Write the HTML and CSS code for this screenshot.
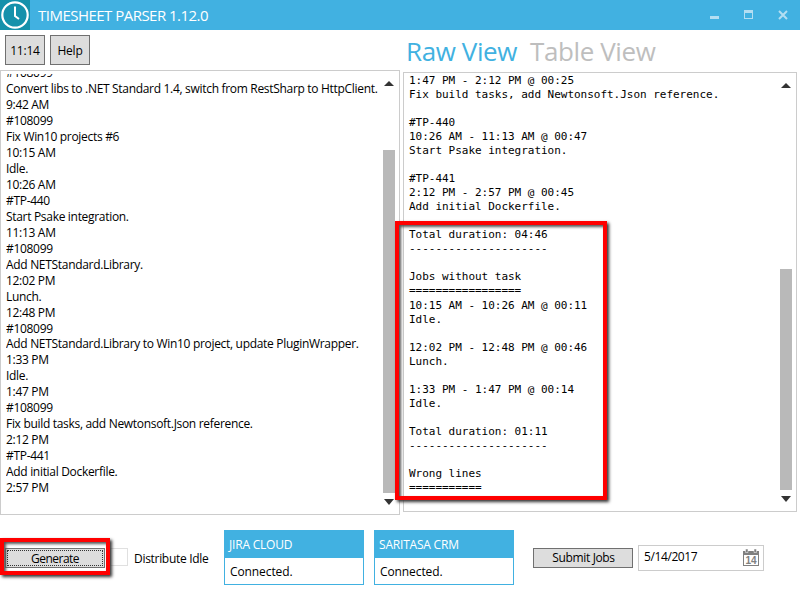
FILE: index.html
```html
<!DOCTYPE html>
<html lang="en">
<head>
<meta charset="utf-8">
<title>Timesheet Parser</title>
<link rel="stylesheet" href="styles.css">
</head>
<body>
<div class="app">
  <header class="titlebar">
    <svg class="logo" width="30" height="30" viewBox="0 0 30 30"><rect width="30" height="30" fill="#1591ab"/><circle cx="15" cy="15" r="12.7" fill="none" stroke="#fff" stroke-width="2.2"/><path d="M15 6.500v9.500l4 3" fill="none" stroke="#fff" stroke-width="2"/></svg>
    <h1 class="title">TIMESHEET PARSER 1.12.0</h1>
    <svg class="controls" width="80" height="30" viewBox="0 0 80 30" fill="#b3def2"><rect x="-10" y="16" width="9" height="3"/><path d="M24 10h9v9h-9zM25 13v5h7v-5z" fill-rule="evenodd"/><path d="M59 11l8 8M67 11l-8 8" stroke="#b3def2" stroke-width="2"/></svg>
  </header>
  <main class="panes">
    <section class="left">
      <div class="toolbar"><button class="btn tool">11:14</button><button class="btn tool">Help</button></div>
      <div class="box">
        <pre class="notes">#108099
Convert libs to .NET Standard 1.4, switch from RestSharp to HttpClient.
9:42 AM
#108099
Fix Win10 projects #6
10:15 AM
Idle.
10:26 AM
#TP-440
Start Psake integration.
11:13 AM
#108099
Add NETStandard.Library.
12:02 PM
Lunch.
12:48 PM
#108099
Add NETStandard.Library to Win10 project, update PluginWrapper.
1:33 PM
Idle.
1:47 PM
#108099
Fix build tasks, add Newtonsoft.Json reference.
2:12 PM
#TP-441
Add initial Dockerfile.
2:57 PM</pre>
        <div class="scroll scroll-left"><i class="up"></i><i class="thumb"></i><i class="down"></i></div>
      </div>
    </section>
    <section class="right">
      <nav class="tabs"><span class="tab active">Raw View</span><span class="tab">Table View</span></nav>
      <div class="box">
        <pre class="report">1:47 PM - 2:12 PM @ 00:25
Fix build tasks, add Newtonsoft.Json reference.

#TP-440
10:26 AM - 11:13 AM @ 00:47
Start Psake integration.

#TP-441
2:12 PM - 2:57 PM @ 00:45
Add initial Dockerfile.

Total duration: 04:46
---------------------

Jobs without task
=================
10:15 AM - 10:26 AM @ 00:11
Idle.

12:02 PM - 12:48 PM @ 00:46
Lunch.

1:33 PM - 1:47 PM @ 00:14
Idle.

Total duration: 01:11
---------------------

Wrong lines
===========</pre>
        <div class="scroll scroll-right"><i class="up"></i><i class="thumb"></i><i class="down"></i></div>
      </div>
    </section>
  </main>
  <footer class="footer">
    <button class="btn generate"><span>Generate</span></button>
    <span class="check"></span>
    <span class="check-label">Distribute Idle</span>
    <div class="card"><div class="card-head">JIRA CLOUD</div><div class="card-body">Connected.</div></div>
    <div class="card second"><div class="card-head">SARITASA CRM</div><div class="card-body">Connected.</div></div>
    <button class="btn submit">Submit Jobs</button>
    <div class="date"><span>5/14/2017</span>
      <svg width="16" height="17" viewBox="0 0 16 17"><path d="M0 2h16v15H0zM1 6v10h14V6z" fill="#808080" fill-rule="evenodd"/><path d="M2.500 0h2.500v3.500h-2.500zM11 0h2.500v3.500h-2.500z" fill="#808080" stroke="#fff" stroke-width=".5"/><text x="8" y="14.800" text-anchor="middle" class="day">14</text></svg>
    </div>
  </footer>
  <div class="mark mark-report"></div>
  <div class="mark mark-generate"></div>
</div>
</body>
</html>
```
FILE: styles.css
```css
* { box-sizing: border-box; }
body { margin: 0; background: #fff; }
.app { position: relative; width: 800px; height: 600px; overflow: hidden; display: flex; flex-direction: column; background: #fff; color: #000; font: 12px/16px "Open Sans", "Noto Sans", sans-serif; letter-spacing: -.2px; }
.titlebar { height: 30px; display: flex; align-items: center; background: #41b1e1; color: #fff; }
.title { margin: 0 0 0 8px; font-size: 15px; font-weight: 400; line-height: 28px; letter-spacing: -.52px; white-space: nowrap; flex: 1; }
.controls { flex: none; overflow: visible; }
.panes { height: 485px; display: flex; gap: 3px; }
.left { width: 400px; }
.right { width: 394px; }
.toolbar { height: 40px; padding: 5px; display: flex; gap: 5px; }
.btn { border: 1px solid #707070; background: #ddd; color: #000; font: inherit; letter-spacing: inherit; padding: 0; flex: none; }
.tool { width: 40px; height: 30px; padding-top: 1px; }
.left .box { height: 445px; }
.box { display: flex; justify-content: space-between; border: 1px solid #ccc; overflow: hidden; }
.notes { margin: 3px 0 0 5px; height: 430px; overflow: hidden; font: 12px/15.97px "Open Sans", sans-serif; letter-spacing: -.31px; flex: none; width: 374px; }
.notes::before { content: ""; display: block; margin-top: -9px; }
.scroll { display: flex; flex-direction: column; align-items: center; flex: none; }
.scroll i { display: block; flex: none; }
.up { width: 10px; height: 5px; background: #333; clip-path: polygon(50% 0, 100% 100%, 0 100%); }
.down { width: 10px; height: 6px; background: #333; clip-path: polygon(0 0, 100% 0, 50% 100%); }
.thumb { background: #b9b9b9; width: 12px; }
.scroll-left { width: 12px; margin-right: 4px; padding-top: 10px; }
.scroll-left .thumb { height: 343px; margin: 64px 0 6px; }
.tabs { height: 42px; display: flex; gap: 13px; padding: 3px 0 0 3px; font-size: 26px; line-height: 36px; letter-spacing: -.4px; white-space: nowrap; color: #bebebe; }
.active { color: #41b1e1; }
.right .box { height: 440px; }
.report { margin: 1px 0 0 5px; font: 11px/14.03px "DejaVu Sans Mono", monospace; letter-spacing: -.022px; }
.scroll-right { width: 12px; margin-right: 4px; padding-top: 10px; }
.scroll-right .thumb { height: 221px; margin: 181px 0 6px; }
.footer { height: 85px; display: flex; align-items: flex-start; padding: 15px 0 0 5px; }
.generate { width: 100px; height: 20px; margin-top: 18px; padding: 1px; letter-spacing: -.5px; }
.generate span { display: block; height: 16px; outline: 1px dotted #333; outline-offset: -1px; line-height: 18px; }
.check { width: 18px; height: 18px; margin: 18px 0 0 5px; border: 1px solid #e0e0e0; }
.check-label { width: 90px; margin: 21px 0 0 6px; white-space: nowrap; letter-spacing: -.3px; }
.card { width: 140px; height: 55px; border: 1px solid #41b1e1; border-width: 0 1px 1px; letter-spacing: -.1px; }
.second { margin-left: 10px; }
.card-head { height: 28px; padding-left: 4px; line-height: 29px; letter-spacing: -.2px; background: #41b1e1; color: #fff; }
.card-body { padding-left: 5px; line-height: 28px; }
.submit { width: 100px; height: 20px; margin: 18px 5px 0 19px; padding: 0 0 0 1px; line-height: 18px; letter-spacing: -.35px; }
.date { width: 126px; height: 26px; margin-top: 15px; padding: 3px 4px 0 5px; border: 1px solid #ccc; display: flex; justify-content: space-between; letter-spacing: -.4px; }
.day { font: bold 10px "Liberation Sans", sans-serif; letter-spacing: 0; fill: #808080; }
.mark { position: absolute; border: 4px solid #f00; box-shadow: 2px 2px 3px #333, inset 2px 2px 3px #555; }
.mark-report { left: 395px; top: 221px; width: 212px; height: 279px; }
.mark-generate { left: 0; top: 538px; width: 110px; height: 37px; }
```
